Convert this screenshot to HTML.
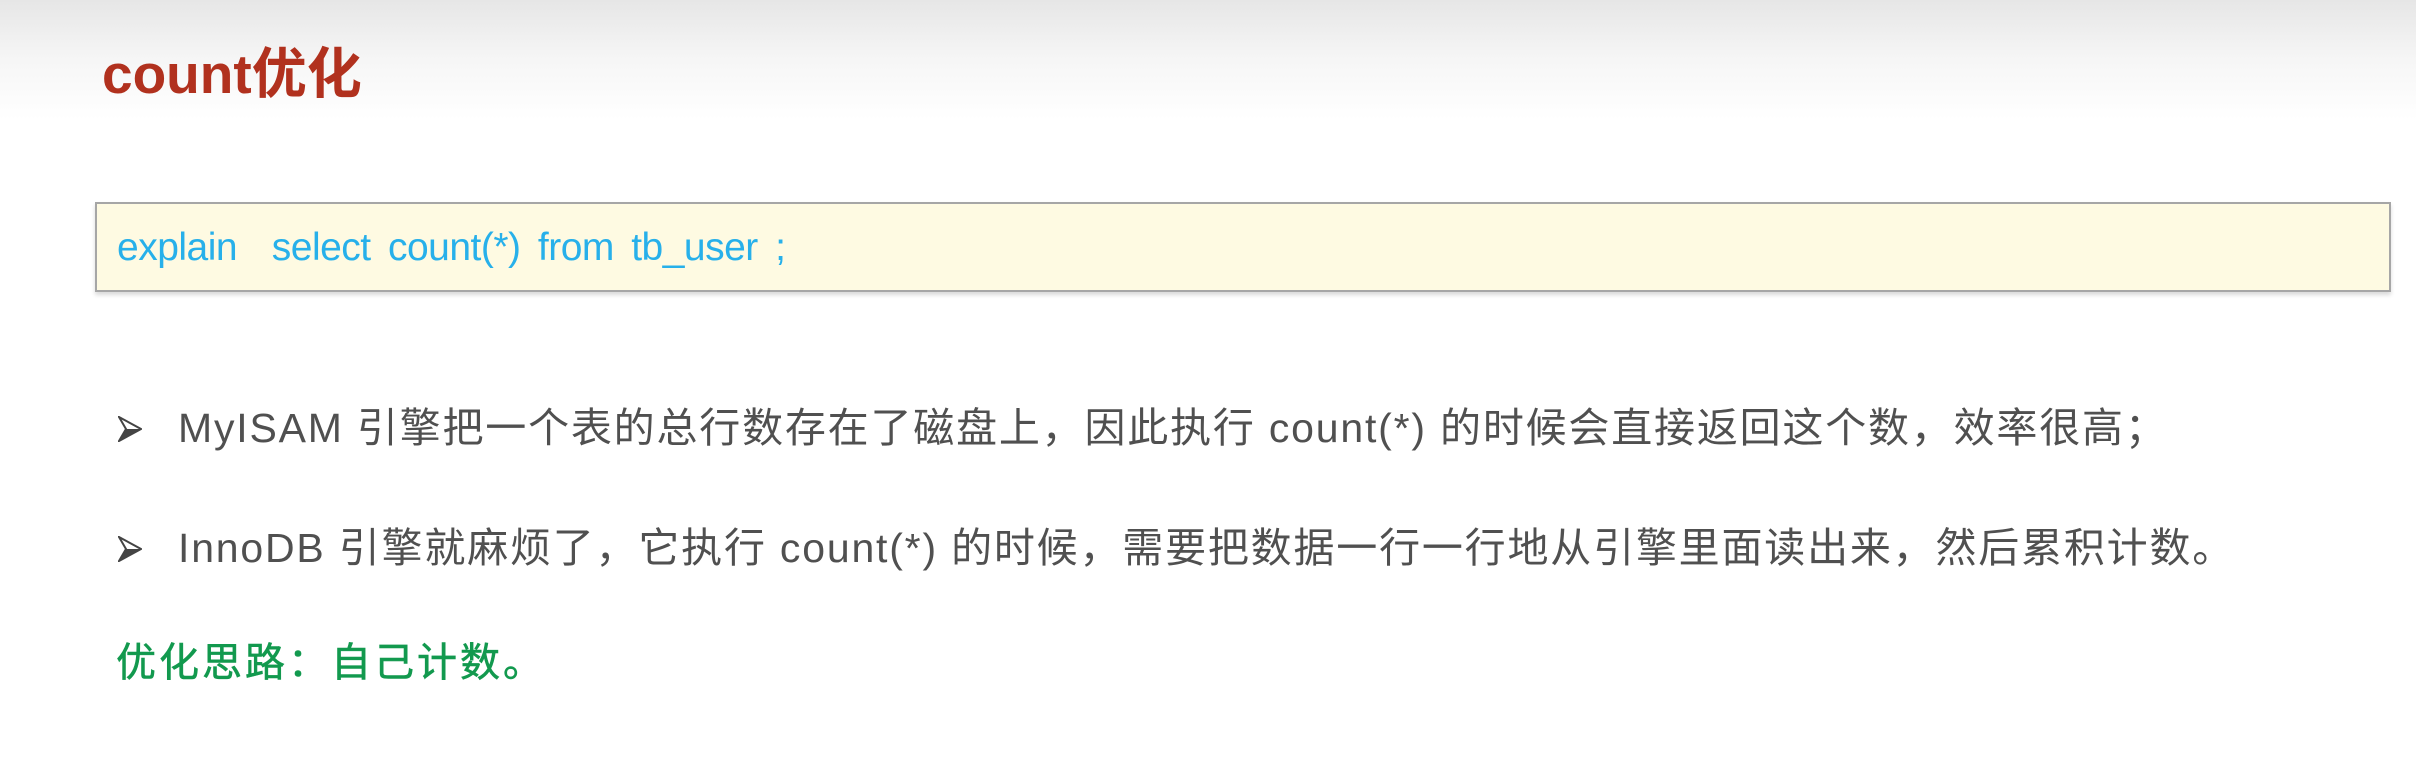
<!DOCTYPE html>
<html><head><meta charset="utf-8"><style>
html,body{margin:0;padding:0}
body{width:2416px;height:772px;overflow:hidden;position:relative;background:linear-gradient(#e6e6e6 0,#f6f6f6 60px,#fff 120px,#fff 100%);font-family:"Liberation Sans","Noto Sans CJK SC",sans-serif}
.t{position:absolute;left:102px;top:47px;font-size:55px;font-weight:bold;color:#b1311e;line-height:1}
.box{position:absolute;left:95px;top:202px;width:2292px;height:86px;background:#fefae2;border:2px solid #a6a6a6;box-shadow:0 3px 4px rgba(0,0,0,.15)}
.code{position:absolute;left:20px;top:22px;font-size:39px;color:#27b0ea;letter-spacing:-0.5px;word-spacing:7px;white-space:pre}
.b{position:absolute;left:118px;font-size:41px;color:#505050;white-space:nowrap;letter-spacing:1.8px}
.b .ar{display:inline-block;width:60px}
.g{position:absolute;left:116px;top:630px;font-size:40px;color:#12994e;letter-spacing:3px;white-space:nowrap;-webkit-text-stroke:0.6px #12994e}
</style></head><body>
<div class="t">count优化</div>
<div class="box"><div class="code">explain  select count(*) from tb_user ;</div></div>
<div class="b" style="top:394px"><span class="ar"><svg width="24" height="26" viewBox="0 0 24 26"><path d="M1 1 L23 13 L1 25 L8 13 Z" fill="#fff" stroke="#444" stroke-width="2"/><path d="M8 13 L23 13 L1 25 Z" fill="#444"/></svg></span>MyISAM 引擎把一个表的总行数存在了磁盘上，因此执行 count(*) 的时候会直接返回这个数，效率很高；</div>
<div class="b" style="top:514px"><span class="ar"><svg width="24" height="26" viewBox="0 0 24 26"><path d="M1 1 L23 13 L1 25 L8 13 Z" fill="#fff" stroke="#444" stroke-width="2"/><path d="M8 13 L23 13 L1 25 Z" fill="#444"/></svg></span>InnoDB 引擎就麻烦了，它执行 count(*) 的时候，需要把数据一行一行地从引擎里面读出来，然后累积计数。</div>
<div class="g">优化思路：自己计数。</div>
</body></html>
